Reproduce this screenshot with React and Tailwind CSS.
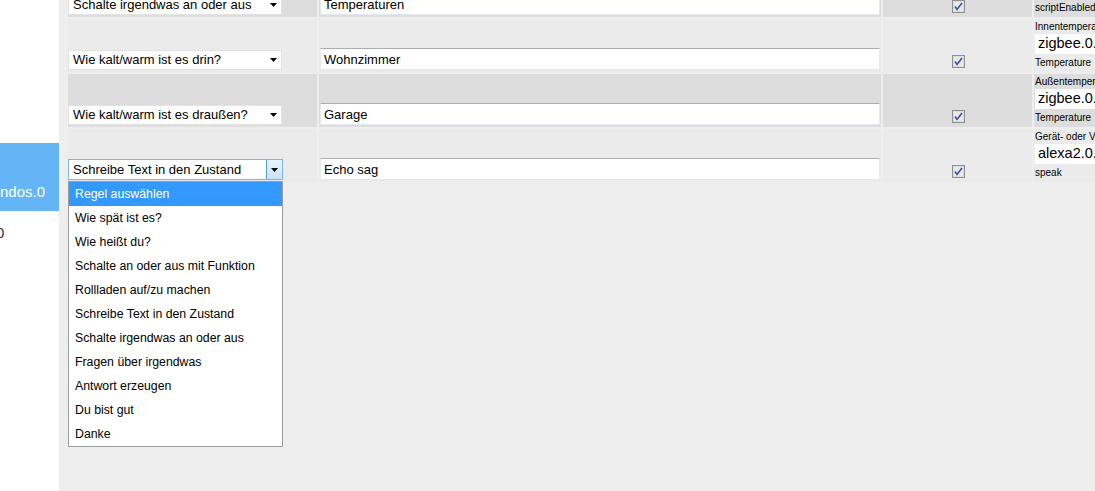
import React from "react";

const rules = [
  "Regel auswählen",
  "Wie spät ist es?",
  "Wie heißt du?",
  "Schalte an oder aus mit Funktion",
  "Rollladen auf/zu machen",
  "Schreibe Text in den Zustand",
  "Schalte irgendwas an oder aus",
  "Fragen über irgendwas",
  "Antwort erzeugen",
  "Du bist gut",
  "Danke",
];

const rows = [
  {
    rule: "Schalte irgendwas an oder aus",
    words: "Temperaturen",
    label: "Schalter",
    id: "javascript.0.scriptEnabled",
    type: "scriptEnabled",
    dark: true,
  },
  {
    rule: "Wie kalt/warm ist es drin?",
    words: "Wohnzimmer",
    label: "Innentemperatur",
    id: "zigbee.0.00158d0001",
    type: "Temperature",
    dark: false,
  },
  {
    rule: "Wie kalt/warm ist es draußen?",
    words: "Garage",
    label: "Außentemperatur",
    id: "zigbee.0.00158d0002",
    type: "Temperature",
    dark: true,
  },
  {
    rule: "Schreibe Text in den Zustand",
    words: "Echo sag",
    label: "Gerät- oder Variablen-ID",
    id: "alexa2.0.Echo-Devices",
    type: "speak",
    dark: false,
    open: true,
  },
];

function Arrow() {
  return (
    <svg width="7" height="4" viewBox="0 0 7 4">
      <polygon points="0,0 7,0 3.5,4" fill="#000" />
    </svg>
  );
}

function Select({ value, open }) {
  if (!open) {
    return (
      <div className="flex items-center justify-between w-[214px] h-[20px] bg-white border border-[#e2e2e2] pl-[4px] pr-[4px] text-[13px] text-black">
        <span className="whitespace-nowrap">{value}</span>
        <Arrow />
      </div>
    );
  }
  return (
    <div className="relative w-[215px]">
      <div className="flex items-center justify-between h-[21px] bg-white border border-[#7eb4ea] pl-[4px] text-[13px] text-black">
        <span className="whitespace-nowrap">{value}</span>
        <div className="flex items-center justify-center w-[16px] h-full bg-gradient-to-b from-[#eaf4fd] to-[#c9e2f9] border-l border-[#569de5]">
          <Arrow />
        </div>
      </div>
      <ul className="absolute left-0 top-[22px] w-[215px] bg-white border border-[#9c9c9c] z-10">
        {rules.map((r, i) => (
          <li
            key={i}
            className={
              i === 0
                ? "h-[24px] flex items-center pl-[6px] pt-[1px] text-[12.3px] bg-[#3399ff] text-white"
                : "h-[24px] flex items-center pl-[6px] pt-[1px] text-[12.3px] text-black"
            }
          >
            {r}
          </li>
        ))}
      </ul>
    </div>
  );
}

function Checkbox() {
  return (
    <svg width="13" height="13" viewBox="0 0 13 13">
      <rect x="0.5" y="0.5" width="12" height="12" fill="#dcdcdc" stroke="#8e8f8f" />
      <rect x="2" y="2" width="9" height="9" fill="#e9e9e9" />
      <path d="M3 6.5 L5 9.5 L10 3" fill="none" stroke="#3c4fa8" strokeWidth="1.6" />
    </svg>
  );
}

export default function App() {
  return (
    <div
      className="flex w-[1095px] h-[491px] overflow-hidden bg-white"
      style={{ fontFamily: '"Liberation Sans", Arial, sans-serif' }}
    >
      {/* Sidebar */}
      <div className="w-[59px] shrink-0 bg-white pt-[143px] overflow-hidden">
        <div className="h-[68px] bg-[#64b5f6] text-white text-[15px] flex items-end pb-[8px] whitespace-nowrap">
          ndos.0
        </div>
        <div className="mt-[11px] text-[15px] text-[#333] -ml-[4px]">0</div>
      </div>

      {/* Main */}
      <div className="flex-1 bg-[#eeeeee] overflow-hidden">
        <div className="-mt-[38px] ml-[7px] p-[2px] flex flex-col gap-[2px] w-[1200px]">
          {rows.map((row, i) => (
            <div
              key={i}
              className="grid grid-cols-[249px_562px_149px_200px] gap-[2px] h-[53px]"
            >
              <div className={(row.dark ? "bg-[#dddddd]" : "bg-[#ebebeb]") + " flex items-end pb-[2px]"}>
                <Select value={row.rule} open={row.open} />
              </div>
              <div className={(row.dark ? "bg-[#dddddd]" : "bg-[#ebebeb]") + " flex items-end px-[1px] pb-[2px]"}>
                <div className="w-full h-[22px] bg-white border border-[#e3e9ef] border-t-[#abadb3] pl-[3px] pt-[1px] text-[13px] text-black flex items-center">
                  {row.words}
                </div>
              </div>
              <div className={(row.dark ? "bg-[#dddddd]" : "bg-[#ebebeb]") + " flex items-end justify-center pb-[4px] pl-[2px]"}>
                <Checkbox />
              </div>
              <div className={(row.dark ? "bg-[#dddddd]" : "bg-[#ebebeb]") + " flex flex-col pt-[2px] pl-[1px] text-black whitespace-nowrap overflow-hidden"}>
                <div className="text-[10px] leading-[12px]">{row.label}</div>
                <div className="mt-[1px] h-[20px] bg-white pl-[3px] text-[14.5px] flex items-center">
                  {row.id}
                </div>
                <div className="mt-[3px] text-[10px] leading-[12px]">{row.type}</div>
              </div>
            </div>
          ))}
        </div>
      </div>
    </div>
  );
}
